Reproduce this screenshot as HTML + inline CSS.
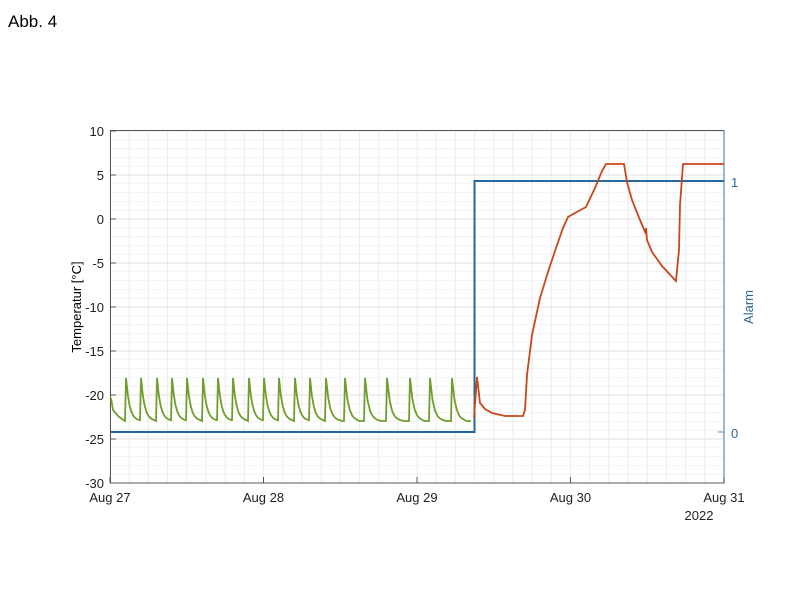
<!DOCTYPE html>
<html><head><meta charset="utf-8"><style>
html,body{margin:0;padding:0;background:#fff;width:800px;height:600px;overflow:hidden;font-family:"Liberation Sans",Arial,sans-serif}
</style></head><body>
<svg id="s" width="800" height="600" xmlns="http://www.w3.org/2000/svg" style="position:absolute;left:0;top:0">
<text x="8" y="27" font-size="17" fill="#000" font-family="Liberation Sans, sans-serif">Abb. 4</text>
<g id="grid"></g>
<rect x="110.5" y="130.5" width="613.5" height="352.5" fill="none" stroke="#555" stroke-width="1"/>
<line x1="724" y1="130" x2="724" y2="483" stroke="#5a8ab5" stroke-width="1.2"/>
<g id="ticks" font-size="13" fill="#222" font-family="Liberation Sans, sans-serif"></g>
<text transform="translate(81,307) rotate(-90)" font-size="13" text-anchor="middle" fill="#000">Temperatur [°C]</text>
<text transform="translate(753,307) rotate(-90)" font-size="13" text-anchor="middle" fill="#2a6a9a">Alarm</text>
<text x="731" y="187" font-size="13" fill="#2a6a9a">1</text>
<text x="731" y="438" font-size="13" fill="#2a6a9a">0</text>
<line x1="718" y1="181" x2="724" y2="181" stroke="#5a8ab5"/>
<line x1="718" y1="432" x2="724" y2="432" stroke="#5a8ab5"/>
<path id="green" fill="none" stroke="#6f9e2e" stroke-width="1.8"/>
<path d="M110,432 L474.5,432 L474.5,181 L724,181" fill="none" stroke="#22689c" stroke-width="2"/>
<path d="M474,418 L477,377 L480,403 L485,409 L492,413 L505,416 L523,416 L525,410 L527,375 L532,335 L540,298 L548,272 L556,248 L563,228 L568,217 L575,213 L586,207 L595,188 L602,171 L606,164 L624,164 L627,182 L632,200 L640,220 L646,234 L646,228 L647,240 L652,252 L662,266 L676,281 L679,250 L680,205 L683,164 L724,164" fill="none" stroke="#c9471a" stroke-width="1.8"/>
</svg>
<script>
var g=document.getElementById('grid'),t=document.getElementById('ticks'),ns='http://www.w3.org/2000/svg';
function L(p,x1,y1,x2,y2,c){var l=document.createElementNS(ns,'line');l.setAttribute('x1',x1);l.setAttribute('y1',y1);l.setAttribute('x2',x2);l.setAttribute('y2',y2);l.setAttribute('stroke',c);l.setAttribute('stroke-width','1');p.appendChild(l);}
function T(x,y,s,a){var e=document.createElementNS(ns,'text');e.setAttribute('x',x);e.setAttribute('y',y);e.setAttribute('text-anchor',a);e.textContent=s;t.appendChild(e);}
for(var v=-30;v<=10;v++){var y=483-(v+30)*8.8;L(g,110,y,724,y,v%5==0?'#e2e2e2':'#f3f3f3');}
for(var i=0;i<=32;i++){var x=110+i*614/32;L(g,x,130,x,483,'#ececec');}
for(var v=-30;v<=10;v+=5){var y=483-(v+30)*8.8;L(t,110,y,116,y,'#555');T(104,y+5,String(v),'end');}
var days=['Aug 27','Aug 28','Aug 29','Aug 30','Aug 31'];
for(var d=0;d<5;d++){var x=110+d*153.5;L(t,x,477,x,483,'#555');T(x,502,days[d],'middle');}
T(699,520,'2022','middle');
var xs=[126,141,157,172,187,203,218,233,249,264,279,295,310,326,345,365,387,410,430,452];
var p='M111,398 L113,410 L118,416 L122,419';
xs.forEach(function(x,i){var nx=(i<xs.length-1?xs[i+1]:472)-1;p+=' L'+(x-1)+',421 L'+x+',378';
 for(var k=1;k<=8;k++){var xx=x+(nx-x)*k/8;var yy=421-43*Math.exp(-(xx-x)/3.5);if(xx-x>14)yy=421;p+=' L'+xx.toFixed(1)+','+yy.toFixed(1);} });
document.getElementById('green').setAttribute('d',p);
</script>
</body></html>
